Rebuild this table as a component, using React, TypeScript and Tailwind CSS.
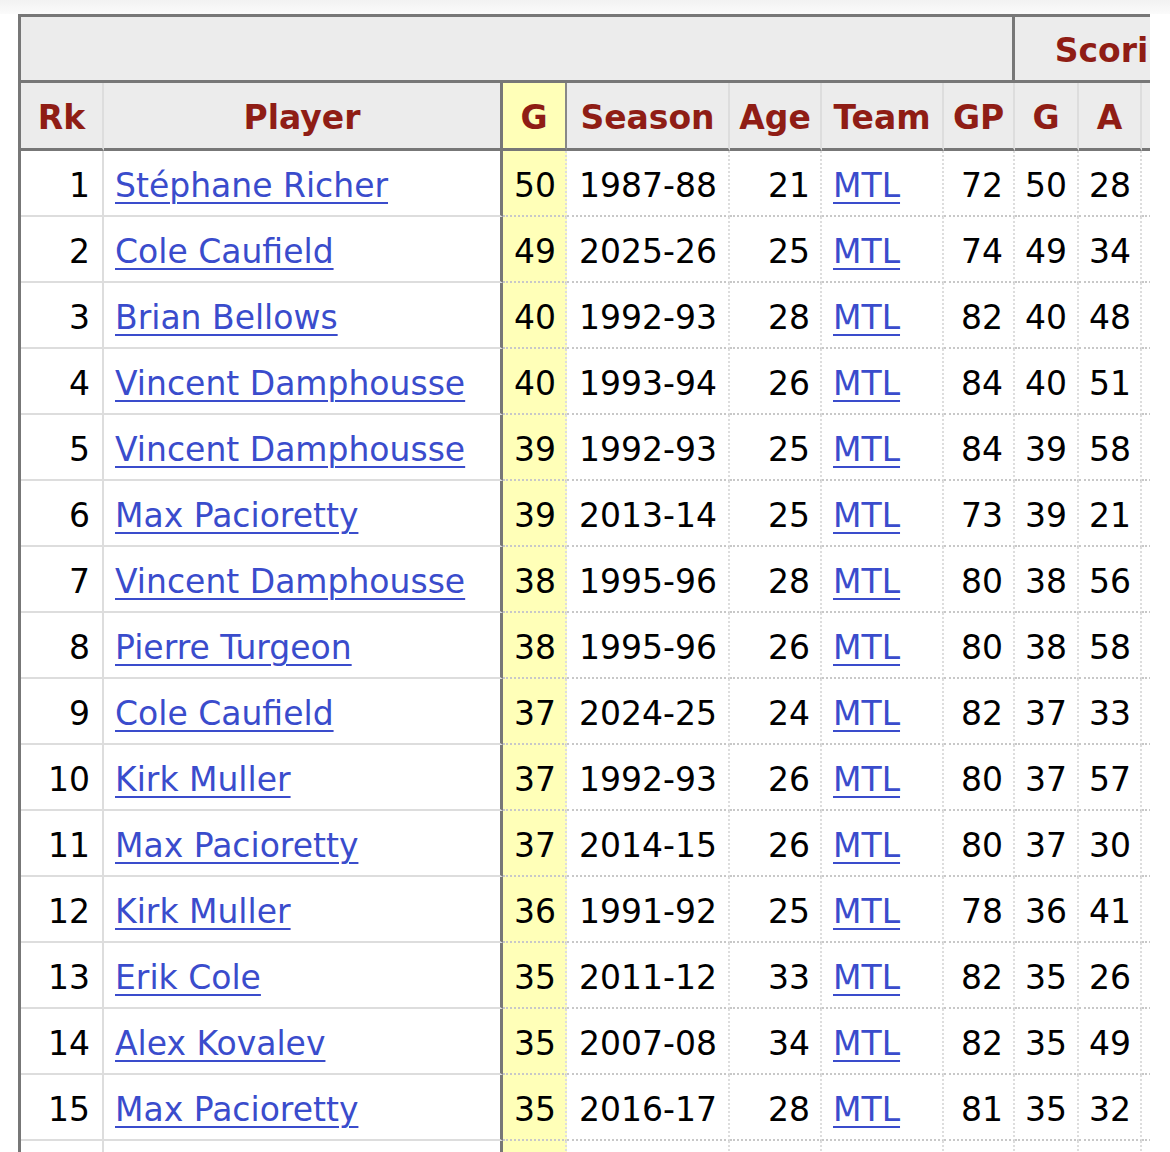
import React from 'react';

type Row = [number, string, number, string, number, string, number, number, number];

const rows: Row[] = [
  [1, 'Stéphane Richer', 50, '1987-88', 21, 'MTL', 72, 50, 28],
  [2, 'Cole Caufield', 49, '2025-26', 25, 'MTL', 74, 49, 34],
  [3, 'Brian Bellows', 40, '1992-93', 28, 'MTL', 82, 40, 48],
  [4, 'Vincent Damphousse', 40, '1993-94', 26, 'MTL', 84, 40, 51],
  [5, 'Vincent Damphousse', 39, '1992-93', 25, 'MTL', 84, 39, 58],
  [6, 'Max Pacioretty', 39, '2013-14', 25, 'MTL', 73, 39, 21],
  [7, 'Vincent Damphousse', 38, '1995-96', 28, 'MTL', 80, 38, 56],
  [8, 'Pierre Turgeon', 38, '1995-96', 26, 'MTL', 80, 38, 58],
  [9, 'Cole Caufield', 37, '2024-25', 24, 'MTL', 82, 37, 33],
  [10, 'Kirk Muller', 37, '1992-93', 26, 'MTL', 80, 37, 57],
  [11, 'Max Pacioretty', 37, '2014-15', 26, 'MTL', 80, 37, 30],
  [12, 'Kirk Muller', 36, '1991-92', 25, 'MTL', 78, 36, 41],
  [13, 'Erik Cole', 35, '2011-12', 33, 'MTL', 82, 35, 26],
  [14, 'Alex Kovalev', 35, '2007-08', 34, 'MTL', 82, 35, 49],
  [15, 'Max Pacioretty', 35, '2016-17', 28, 'MTL', 81, 35, 32],
];

const th = 'h-[68px] pt-[4px] bg-[#ececec] text-[#8f1d15] font-bold text-center border-b-[3px] border-b-[#777] border-r-2 border-r-[#ddd] px-0';
const solidCell = 'h-[66px] pt-[6px] border-b-2 border-b-[#ddd] border-r-2 border-r-[#ddd] px-[10px] whitespace-nowrap';
const dotCell = 'h-[66px] pt-[6px] border-b-2 border-dotted border-b-[#c8c8c8] border-r-2 border-r-[#ddd] border-r-solid px-[10px] whitespace-nowrap';
const link = 'text-[#3a4ccc] underline decoration-2 underline-offset-[5px]';

export default function App() {
  return (
    <div className="min-h-screen bg-white font-['DejaVu_Sans',Verdana,sans-serif] text-[33px] text-black">
      <div className="h-[14px] bg-gradient-to-b from-[#f2f2f2] to-[#fbfbfb]" />
      <div className="ml-[18px] w-[1132px] overflow-hidden">
        <table className="table-fixed w-[1157px] border-separate border-spacing-0 border-t-[3px] border-l-[3px] border-[#777] leading-[38px]">
          <colgroup>
            <col className="w-[83px]" />
            <col className="w-[399px]" />
            <col className="w-[64px]" />
            <col className="w-[163px]" />
            <col className="w-[92px]" />
            <col className="w-[122px]" />
            <col className="w-[71px]" />
            <col className="w-[64px]" />
            <col className="w-[63px]" />
            <col className="w-[93px]" />
          </colgroup>
          <thead>
            <tr>
              <th colSpan={7} className="h-[66px] bg-[#ececec] border-b-[3px] border-r-[3px] border-[#777]" />
              <th colSpan={3} className="h-[66px] pt-[4px] bg-[#ececec] border-b-[3px] border-[#777] text-[#8f1d15] font-bold text-center whitespace-nowrap">
                Scoring
              </th>
            </tr>
            <tr>
              <th className={th}>Rk</th>
              <th className="h-[68px] pt-[4px] bg-[#ececec] text-[#8f1d15] font-bold text-center border-b-[3px] border-b-[#777] border-r-[3px] border-r-[#777]">Player</th>
              <th className="h-[68px] pt-[4px] bg-[#ffffb8] text-[#8f1d15] font-bold text-center border-b-[3px] border-b-[#777] border-r-2 border-r-[#888]">G</th>
              <th className={th}>Season</th>
              <th className={th}>Age</th>
              <th className={th}>Team</th>
              <th className={th}>GP</th>
              <th className={th}>G</th>
              <th className={th}>A</th>
              <th className={th}>PTS</th>
            </tr>
          </thead>
          <tbody>
            {rows.map((r) => (
              <tr key={r[0]}>
                <td className={`${solidCell} text-right pr-[12px]`}>{r[0]}</td>
                <td className="h-[66px] pt-[6px] border-b-2 border-b-[#ddd] border-r-[3px] border-r-[#777] px-[11px] whitespace-nowrap text-left">
                  <a href="#" className={link}>{r[1]}</a>
                </td>
                <td className={`${dotCell} bg-[#ffffb8] text-right pr-[9px]`}>{r[2]}</td>
                <td className={`${dotCell} text-left pl-[12px]`}>{r[3]}</td>
                <td className={`${dotCell} text-right`}>{r[4]}</td>
                <td className={`${dotCell} text-left pl-[11px]`}>
                  <a href="#" className={link}>{r[5]}</a>
                </td>
                <td className={`${dotCell} text-right`}>{r[6]}</td>
                <td className={`${dotCell} text-right`}>{r[7]}</td>
                <td className={`${dotCell} text-right`}>{r[8]}</td>
                <td className={`${dotCell} text-right`}>{r[7] + r[8]}</td>
              </tr>
            ))}
            <tr>
              <td className={solidCell}>&nbsp;</td>
              <td className="h-[66px] border-b-2 border-b-[#ddd] border-r-[3px] border-r-[#777]">&nbsp;</td>
              <td className={`${dotCell} bg-[#ffffb8]`}>&nbsp;</td>
              <td className={dotCell}>&nbsp;</td>
              <td className={dotCell}>&nbsp;</td>
              <td className={dotCell}>&nbsp;</td>
              <td className={dotCell}>&nbsp;</td>
              <td className={dotCell}>&nbsp;</td>
              <td className={dotCell}>&nbsp;</td>
              <td className={dotCell}>&nbsp;</td>
            </tr>
          </tbody>
        </table>
      </div>
    </div>
  );
}
